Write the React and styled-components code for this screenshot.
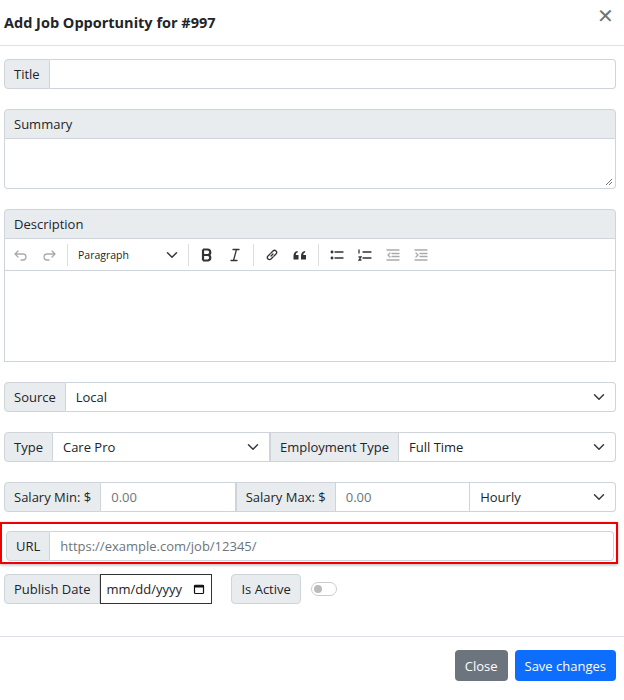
import React from 'react'
import styled, { createGlobalStyle } from 'styled-components'

const Global = createGlobalStyle`
  body { margin: 0; background: #fff; font-family: "Segoe UI", "Open Sans", "Noto Sans", sans-serif; color: #212529; font-size: 13px; }
  * { box-sizing: border-box; }
`

const Header = styled.div`
  height: 46px;
  border-bottom: 1px solid #dee2e6;
  display: flex;
  align-items: center;
  justify-content: space-between;
  padding: 0 8px 0 4px;
`
const Title = styled.h5`
  margin: 0;
  font-size: 14.5px;
  font-weight: 700;
`
const CloseX = styled.span`
  font-size: 20px;
  color: #6c757d;
  margin-top: -14px;
  margin-right: 2px;
`
const Body = styled.div`
  padding: 13px 8px 32px 4px;
  display: flex;
  flex-direction: column;
  gap: 20px;
`
const Group = styled.div`
  display: flex;
  height: 30px;
`
const Stack = styled.div`
  display: flex;
  flex-direction: column;
`
const Addon = styled.div`
  background: #e9ecef;
  border: 1px solid #ced4da;
  border-radius: ${p => p.$r || '4px 0 0 4px'};
  padding: 0 9px;
  display: flex;
  align-items: center;
  white-space: nowrap;
`
const Input = styled.div`
  flex: ${p => p.$flex || 1};
  border: 1px solid #ced4da;
  border-left: none;
  border-radius: ${p => p.$r || '0 4px 4px 0'};
  display: flex;
  align-items: center;
  justify-content: space-between;
  padding: 0 10px;
  color: ${p => (p.$ph ? '#6c757d' : '#212529')};
  min-width: 0;
`
const Chevron = () => (
  <svg width="12" height="12" viewBox="0 0 16 16" fill="none" stroke="#343a40" strokeWidth="2" strokeLinecap="round" strokeLinejoin="round">
    <path d="M2 5l6 6 6-6" />
  </svg>
)
const LabelBar = styled.div`
  background: #e9ecef;
  border: 1px solid #ced4da;
  border-radius: 4px 4px 0 0;
  height: 30px;
  padding: 0 9px;
  display: flex;
  align-items: center;
`
const Textarea = styled.div`
  height: 50px;
  border: 1px solid #ced4da;
  border-top: none;
  border-radius: 0 0 4px 4px;
  position: relative;
`
const Grip = styled.svg`
  position: absolute;
  right: 2px;
  bottom: 2px;
`
const Toolbar = styled.div`
  height: 32px;
  border: 1px solid #ced4da;
  border-top: none;
  display: flex;
  align-items: center;
  padding: 0 4px;
  gap: 4px;
`
const Tool = styled.span`
  width: 24px;
  display: flex;
  justify-content: center;
  align-items: center;
  color: ${p => p.$dim ? '#aaa' : '#333'};
`
const Sep = styled.span`
  width: 1px;
  height: 22px;
  background: #ddd;
  margin: 0 2px;
`
const Para = styled.span`
  width: 108px;
  display: flex;
  justify-content: space-between;
  align-items: center;
  font-size: 10.5px;
  padding: 0 4px;
`
const Editor = styled.div`
  height: 91px;
  border: 1px solid #ced4da;
  border-top: none;
`
const Highlight = styled.div`
  border: 2px solid #e00;
  margin: -10px -2px -10px -4px;
  padding: 7px 2px 1px 4px;
  box-shadow: 0 1px 3px rgba(0,0,0,0.3);
`
const DateBox = styled.div`
  width: 112px;
  border: 1px solid #333;
  display: flex;
  align-items: center;
  justify-content: space-between;
  padding: 0 6px 0 5px;
`
const Switch = styled.span`
  width: 26px;
  height: 14px;
  border: 1px solid #ccc;
  border-radius: 7px;
  margin-left: 10px;
  align-self: center;
  display: flex;
  align-items: center;
  padding-left: 2px;
  &::before { content: ''; width: 8px; height: 8px; border-radius: 50%; background: #bbb; }
`
const Footer = styled.div`
  border-top: 1px solid #dee2e6;
  display: flex;
  justify-content: flex-end;
  gap: 7px;
  padding: 13px 8px 10px;
`
const Btn = styled.button`
  height: 31px;
  border: none;
  border-radius: 4px;
  color: #fff;
  font: inherit;
  padding: 0 10px;
  background: ${p => p.$bg};
`

const I = ({ children }) => (
  <svg width="16" height="16" viewBox="0 0 16 16" fill="none" stroke="currentColor" strokeWidth="1.3" strokeLinecap="round">{children}</svg>
)

export default function App() {
  return (
    <>
      <Global />
      <Header>
        <Title>Add Job Opportunity for #997</Title>
        <CloseX>✕</CloseX>
      </Header>
      <Body>
        <Group><Addon>Title</Addon><Input /></Group>
        <Stack>
          <LabelBar>Summary</LabelBar>
          <Textarea>
            <Grip width="8" height="8" viewBox="0 0 8 8" stroke="#777"><path d="M7 1L1 7M7 4L4 7" /></Grip>
          </Textarea>
        </Stack>
        <Stack>
          <LabelBar>Description</LabelBar>
          <Toolbar>
            <Tool $dim><I><path d="M5 4L2 7l3 3M2 7h8a3 3 0 010 6H8" /></I></Tool>
            <Tool $dim><I><path d="M11 4l3 3-3 3M14 7H6a3 3 0 000 6h2" /></I></Tool>
            <Sep />
            <Para>Paragraph<Chevron /></Para>
            <Sep />
            <Tool><svg width="16" height="16" viewBox="0 0 16 16" fill="none" stroke="#333" strokeWidth="2.2"><path d="M4 2.5v11M4 2.5h4.5a2.7 2.7 0 010 5.5H4M4 8h5a2.8 2.8 0 010 5.5H4" /></svg></Tool>
            <Tool><I><path d="M6 2.5h6M4 13.5h6M9.5 2.5L6.5 13.5" /></I></Tool>
            <Sep />
            <Tool><I><path d="M7 9l2-2M6 7L4 9a2 2 0 003 3l2-2M10 9l2-2a2 2 0 00-3-3L7 6" /></I></Tool>
            <Tool><svg width="16" height="16" viewBox="0 0 16 16" fill="#333"><path d="M1.5 12.5V9c0-3 1.5-4.5 4-5l.4 1.2C4.3 5.7 3.8 6.7 3.8 8H6.5v4.5zM9 12.5V9c0-3 1.5-4.5 4-5l.4 1.2c-1.6.5-2.1 1.5-2.1 2.8H14v4.5z" /></svg></Tool>
            <Sep />
            <Tool><I><circle cx="3" cy="5" r="0.8" /><circle cx="3" cy="11" r="0.8" /><path d="M6 5h8M6 11h8" /></I></Tool>
            <Tool><I><path d="M2 3v3M2 10h2l-2 3h2M6 5h8M6 11h8" /></I></Tool>
            <Tool $dim><I><path d="M2 3h12M7 6.5h7M7 9.5h7M2 13h12M5 6L3 8l2 2" /></I></Tool>
            <Tool $dim><I><path d="M2 3h12M7 6.5h7M7 9.5h7M2 13h12M3 6l2 2-2 2" /></I></Tool>
          </Toolbar>
          <Editor />
        </Stack>
        <Group><Addon>Source</Addon><Input>Local<Chevron /></Input></Group>
        <Group>
          <Addon>Type</Addon><Input $r="0">Care Pro<Chevron /></Input>
          <Addon $r="0">Employment Type</Addon><Input>Full Time<Chevron /></Input>
        </Group>
        <Group>
          <Addon>Salary Min: $</Addon><Input $r="0" $ph>0.00</Input>
          <Addon $r="0">Salary Max: $</Addon><Input $r="0" $ph>0.00</Input>
          <Input $flex="1.1">Hourly<Chevron /></Input>
        </Group>
        <Highlight>
          <Group><Addon>URL</Addon><Input $ph>https://example.com/job/12345/</Input></Group>
        </Highlight>
        <Group>
          <Addon>Publish Date</Addon>
          <DateBox>mm/dd/yyyy
            <svg width="12" height="12" viewBox="0 0 16 16"><rect x="2" y="3" width="12" height="11" rx="1" fill="none" stroke="#111" strokeWidth="1.6" /><rect x="2" y="3" width="12" height="3" fill="#111" /></svg>
          </DateBox>
          <Addon $r="4px" style={{ marginLeft: 19 }}>Is Active</Addon>
          <Switch />
        </Group>
      </Body>
      <Footer>
        <Btn $bg="#6c757d">Close</Btn>
        <Btn $bg="#0d6efd">Save changes</Btn>
      </Footer>
    </>
  )
}
